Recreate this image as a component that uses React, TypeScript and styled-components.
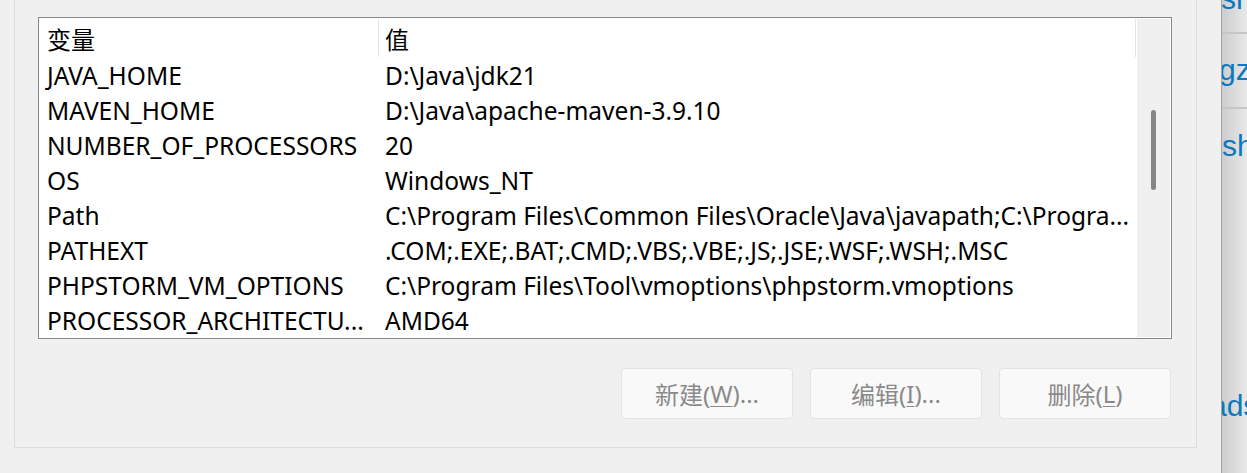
import React from "react";
import styled, { createGlobalStyle } from "styled-components";

const Global = createGlobalStyle`
  html, body {
    margin: 0;
    padding: 0;
    background: #f0f0f0;
    width: 1247px;
    height: 473px;
    overflow: hidden;
  }
  #root { height: 473px; }
`;

const FONT = `"Noto Sans", "Noto Sans CJK SC", sans-serif`;

const Screen = styled.div`
  display: flex;
  height: 473px;
  width: 1247px;
  background: #f0f0f0;
  font-family: ${FONT};
`;

const DialogArea = styled.div`
  width: 1221px;
  flex: none;
  padding-left: 14px;
  box-sizing: border-box;
`;

const GroupBox = styled.div`
  width: 1183px;
  height: 448px;
  box-sizing: border-box;
  border: 1px solid #dcdcdc;
  border-top: none;
  padding: 17px 24px 0 23px;
  display: flex;
  flex-direction: column;
`;

const ListBox = styled.div`
  height: 322px;
  box-sizing: border-box;
  border: 1px solid #828790;
  background: #ffffff;
  padding: 0 1px 1px 0;
  display: flex;
  overflow: hidden;
`;

const Table = styled.div`
  width: 1097px;
  flex: none;
  display: flex;
  flex-direction: column;
`;

const HeaderRow = styled.div`
  display: flex;
  height: 40px;
  flex: none;
`;

const HeaderCell = styled.div<{ $w: number; $pad: number }>`
  width: ${(p) => p.$w}px;
  flex: none;
  box-sizing: border-box;
  padding-left: ${(p) => p.$pad}px;
  display: flex;
  align-items: center;
  font-size: 24px;
  color: #000;
  position: relative;
  &::after {
    content: "";
    position: absolute;
    right: 0;
    top: 1px;
    bottom: 1px;
    width: 1px;
    background: #e5e5e5;
  }
`;

const Row = styled.div`
  display: flex;
  height: 35px;
  flex: none;
`;

const Cell = styled.div<{ $w: number; $pad: number }>`
  width: ${(p) => p.$w}px;
  flex: none;
  box-sizing: border-box;
  padding-left: ${(p) => p.$pad}px;
  display: flex;
  align-items: center;
  font-size: 24.5px;
  color: #000;
  white-space: nowrap;
  overflow: hidden;
`;

const ScrollTrack = styled.div`
  width: 33px;
  flex: none;
  margin: 1px 0 0 1px;
  background: #f0f0f0;
  display: flex;
  justify-content: center;
`;

const Thumb = styled.div<{ $top: number; $h: number }>`
  width: 5px;
  height: ${(p) => p.$h}px;
  margin-top: ${(p) => p.$top}px;
  border-radius: 3px;
  background: #858585;
`;

const ButtonRow = styled.div`
  display: flex;
  justify-content: flex-end;
  gap: 17px;
  margin-top: 29px;
  padding-right: 1px;
`;

const Button = styled.div`
  width: 172px;
  height: 51px;
  box-sizing: border-box;
  border: 1px solid #e3e3e3;
  border-radius: 4px;
  background: #f9f9f9;
  color: #8a8a8a;
  font-size: 24px;
  display: flex;
  align-items: center;
  justify-content: center;
  u {
    text-decoration-thickness: 1px;
    text-underline-offset: 3px;
  }
`;

const SideWindow = styled.div`
  flex: 1;
  border-left: 1px solid #a4a4a4;
  background: linear-gradient(to right, #cdcdcd, #e9e9e9);
  display: flex;
  flex-direction: column;
  overflow: hidden;
  font-family: "Liberation Sans", Arial, sans-serif;
  color: #0a78c0;
  font-size: 30px;
`;

const SideItem = styled.div<{ $h: number; $line: boolean }>`
  height: ${(p) => p.$h}px;
  flex: none;
  box-sizing: border-box;
  border-bottom: ${(p) => (p.$line ? "2px solid #c6c6c6" : "none")};
  line-height: 30px;
  white-space: nowrap;
  overflow: hidden;
`;

const SideText = styled.div<{ $shift: number; $top: number }>`
  margin-left: ${(p) => p.$shift}px;
  margin-top: ${(p) => p.$top}px;
`;

const rows: [string, string][] = [
  ["JAVA_HOME", "D:\\Java\\jdk21"],
  ["MAVEN_HOME", "D:\\Java\\apache-maven-3.9.10"],
  ["NUMBER_OF_PROCESSORS", "20"],
  ["OS", "Windows_NT"],
  ["Path", "C:\\Program Files\\Common Files\\Oracle\\Java\\javapath;C:\\Progra..."],
  ["PATHEXT", ".COM;.EXE;.BAT;.CMD;.VBS;.VBE;.JS;.JSE;.WSF;.WSH;.MSC"],
  ["PHPSTORM_VM_OPTIONS", "C:\\Program Files\\Tool\\vmoptions\\phpstorm.vmoptions"],
  ["PROCESSOR_ARCHITECTU...", "AMD64"],
];

export default function App() {
  return (
    <>
      <Global />
      <Screen>
        <DialogArea>
          <GroupBox>
            <ListBox>
              <Table>
                <HeaderRow>
                  <HeaderCell $w={340} $pad={8}>变量</HeaderCell>
                  <HeaderCell $w={757} $pad={6}>值</HeaderCell>
                </HeaderRow>
                {rows.map(([k, v]) => (
                  <Row key={k}>
                    <Cell $w={340} $pad={8}>{k}</Cell>
                    <Cell $w={757} $pad={6}>{v}</Cell>
                  </Row>
                ))}
              </Table>
              <ScrollTrack>
                <Thumb $top={91} $h={80} />
              </ScrollTrack>
            </ListBox>
            <ButtonRow>
              <Button>新建(<u>W</u>)...</Button>
              <Button>编辑(<u>I</u>)...</Button>
              <Button>删除(<u>L</u>)</Button>
            </ButtonRow>
          </GroupBox>
        </DialogArea>
        <SideWindow>
          <SideItem $h={34} $line>
            <SideText $shift={-1} $top={-16}>sh</SideText>
          </SideItem>
          <SideItem $h={75} $line>
            <SideText $shift={-3} $top={21}>gz</SideText>
          </SideItem>
          <SideItem $h={230} $line={false}>
            <SideText $shift={0} $top={22}>sh</SideText>
          </SideItem>
          <SideItem $h={100} $line={false}>
            <SideText $shift={-12} $top={52}>ads</SideText>
          </SideItem>
        </SideWindow>
      </Screen>
    </>
  );
}
